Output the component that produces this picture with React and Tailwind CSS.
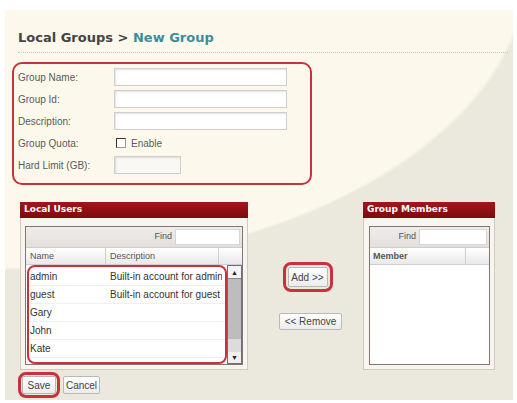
import React from "react";

const font = { fontFamily: '"Liberation Sans", Arial, sans-serif' };

const Field = ({ label, children }) => (
  <div className="flex h-[22px] items-center">
    <span className="w-[100px] pl-[4px] text-[10px] text-[#5a5a5a]">{label}</span>
    {children}
  </div>
);

const TextBox = ({ className }) => (
  <div
    className={`h-[18px] border border-[#cfcfcf] bg-white shadow-[inset_1px_1px_2px_rgba(0,0,0,0.12)] ${className}`}
  />
);

const Btn = ({ children, className = "" }) => (
  <div
    className={`flex items-center justify-center rounded-[2px] border border-[#b9b9b9] bg-gradient-to-b from-white to-[#ececec] text-[10px] text-[#444] ${className}`}
  >
    {children}
  </div>
);

const PanelHeader = ({ title }) => (
  <div
    className="flex h-[16px] items-center bg-gradient-to-b from-[#a3151b] to-[#7e0a0e] pl-[4px] text-[9px] font-bold text-white"
    style={{ fontFamily: '"DejaVu Sans", Verdana, sans-serif' }}
  >
    {title}
  </div>
);

const FindRow = ({ inputW }) => (
  <div className="flex h-[21px] items-center justify-end border-b border-[#d0cdca] bg-gradient-to-b from-[#efedeb] to-[#e2dfdc] pr-[2px]">
    <span className="mr-[3px] text-[9px] text-[#555]">Find</span>
    <div className={`h-[16px] border border-[#d6d6d6] bg-white ${inputW}`} />
  </div>
);

const users = [
  ["admin", "Built-in account for admin"],
  ["guest", "Built-in account for guest"],
  ["Gary", ""],
  ["John", ""],
  ["Kate", ""],
];

export default function App() {
  return (
    <div className="h-[403px] w-[517px] bg-white pl-[5px] pt-[10px]" style={font}>
      <div className="h-[390px] w-[508px] bg-[radial-gradient(ellipse_525px_305px_at_0px_-45px,#fcf9ec_99%,#ebe8de_100%)]">
        {/* Title */}
        <div className="mx-[13px] mr-[5px] border-b border-dotted border-[#c9c3b4] pb-[6px] pt-[20px]">
          <div
            className="h-[16px] text-[13px] font-bold leading-[16px] text-[#444]"
            style={{ fontFamily: '"DejaVu Sans", Verdana, sans-serif' }}
          >
            Local Groups &gt; <span className="text-[#3e8c9c]">New Group</span>
          </div>
        </div>

        {/* Group form */}
        <div className="ml-[7px] mt-[9px] h-[123px] w-[300px] rounded-[10px] border-2 border-[#c8323a] pt-[2px]">
          <Field label="Group Name:">
            <TextBox className="w-[173px]" />
          </Field>
          <Field label="Group Id:">
            <TextBox className="w-[173px]" />
          </Field>
          <Field label="Description:">
            <TextBox className="w-[173px]" />
          </Field>
          <Field label="Group Quota:">
            <div className="ml-[2px] flex items-center">
              <div className="h-[10px] w-[10px] border border-[#333] border-r-[#999] border-b-[#999] bg-white" />
              <span className="ml-[5px] text-[10px] text-[#5a5a5a]">Enable</span>
            </div>
          </Field>
          <Field label="Hard Limit (GB):">
            <TextBox className="w-[67px] !bg-[#f9f8f4]" />
          </Field>
        </div>

        {/* Users / members */}
        <div className="ml-[15px] mt-[17px] flex">
          <div className="h-[168px] w-[228px]">
            <PanelHeader title="Local Users" />
            <div className="h-[152px] border-x border-b border-[#d7c7be] bg-[#f8f5f1] pl-[4px] pt-[8px]">
              <div className="relative h-[139px] w-[218px] border border-[#867471] bg-white">
                <FindRow inputW="w-[65px]" />
                <div className="flex h-[17px] border-b border-[#cfcfcf] bg-gradient-to-b from-white to-[#e9e9e9] text-[9px] text-[#555]">
                  <div className="w-[80px] border-r border-[#cfcfcf] pl-[4px] leading-[17px]">Name</div>
                  <div className="w-[113px] border-r border-[#cfcfcf] pl-[4px] leading-[17px]">Description</div>
                  <div className="flex-1" />
                </div>
                <div className="flex h-[99px]">
                  <div className="w-[200px] pt-[3px]">
                    {users.map(([n, d]) => (
                      <div key={n} className="flex h-[18px] items-center border-b border-[#f0f0f0] text-[10px] text-[#333]">
                        <span className="w-[80px] pl-[4px]">{n}</span>
                        <span className="w-[116px] overflow-hidden whitespace-nowrap pl-[4px]">{d}</span>
                      </div>
                    ))}
                  </div>
                  <div className="ml-[1px] flex w-[15px] flex-col border border-[#6f6f6f] bg-[#c3c3c3]">
                    <div className="flex h-[13px] items-center justify-center border-b border-[#888] bg-[#f4f4f4] text-[7px] leading-none text-[#222]">▲</div>
                    <div className="h-[60px] bg-[#bdbdbd]" />
                    <div className="flex-1 bg-[#dcdcdc]" />
                    <div className="flex h-[11px] items-center justify-center bg-[#f0f0f0] text-[7px] leading-none text-[#222]">▼</div>
                  </div>
                </div>
                <div className="absolute left-[1px] top-[38px] h-[99px] w-[200px] rounded-[8px] border-2 border-[#c8323a]" />
              </div>
            </div>
          </div>

          <div className="flex w-[115px] flex-col items-center pt-[60px]">
            <div className="ml-[4px] rounded-[8px] border-[3px] border-[#c8323a] p-[2px]">
              <Btn className="h-[20px] w-[40px]">Add &gt;&gt;</Btn>
            </div>
            <Btn className="ml-[10px] mt-[21px] h-[17px] w-[63px]">&lt;&lt; Remove</Btn>
          </div>

          <div className="h-[168px] w-[132px]">
            <PanelHeader title="Group Members" />
            <div className="h-[152px] border-x border-b border-[#d7c7be] bg-[#f8f5f1] pl-[5px] pt-[8px]">
              <div className="h-[139px] w-[121px] border border-[#867471] bg-white">
                <FindRow inputW="w-[68px]" />
                <div className="flex h-[17px] border-b border-[#cfcfcf] bg-gradient-to-b from-white to-[#e9e9e9] text-[9px] font-bold text-[#555]">
                  <div className="w-[96px] border-r border-[#cfcfcf] pl-[3px] leading-[17px]">Member</div>
                  <div className="flex-1" />
                </div>
              </div>
            </div>
          </div>
        </div>

        {/* Save / Cancel */}
        <div className="ml-[13px] mt-[2px] flex items-center">
          <div className="rounded-[8px] border-[3px] border-[#c8323a] p-[1px]">
            <Btn className="h-[18px] w-[34px]">Save</Btn>
          </div>
          <Btn className="ml-[3px] h-[18px] w-[37px]">Cancel</Btn>
        </div>
      </div>
    </div>
  );
}
